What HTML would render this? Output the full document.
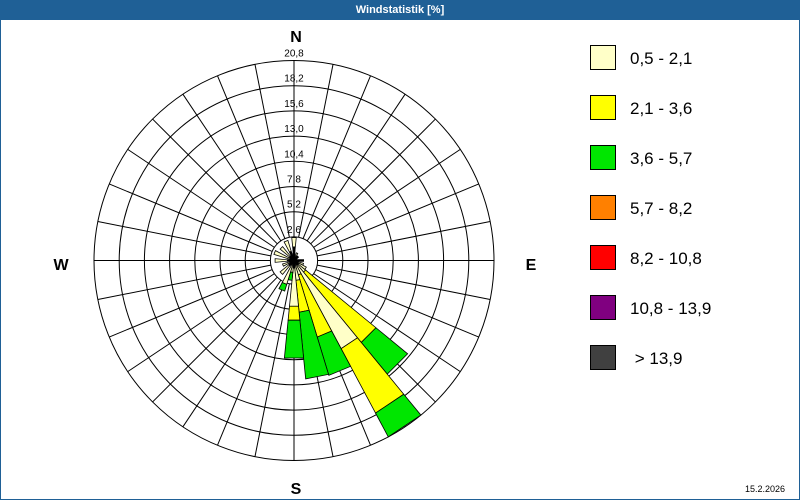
<!DOCTYPE html>
<html><head><meta charset="utf-8">
<style>
html,body{margin:0;padding:0;background:#fff;}
#wrap{position:relative;width:800px;height:500px;overflow:hidden;background:#fff;font-family:"Liberation Sans",sans-serif;}
#hdr{position:absolute;left:0;top:0;width:800px;height:20px;background:#1f6096;color:#fff;font-size:11px;font-weight:bold;text-align:center;line-height:20px;}
#frame{position:absolute;left:0;top:20px;width:798px;height:479px;border:1px solid #1f6096;border-top:none;}
svg{position:absolute;left:0;top:0;}
.lg{position:absolute;left:590px;width:24px;height:23px;border:1px solid #000;}
.lt{position:absolute;left:630px;font-size:17px;color:#000;line-height:20px;}
</style></head><body>
<div id="wrap">
<div id="hdr">Windstatistik [%]</div>
<div id="frame"></div>
<svg id="s" width="800" height="500" xmlns="http://www.w3.org/2000/svg"></svg>
<div class="lg" style="top:45px;background:#ffffc8"></div><div class="lt" style="top:49px">0,5 - 2,1</div>
<div class="lg" style="top:95px;background:#ffff00"></div><div class="lt" style="top:99px">2,1 - 3,6</div>
<div class="lg" style="top:145px;background:#00e600"></div><div class="lt" style="top:149px">3,6 - 5,7</div>
<div class="lg" style="top:195px;background:#ff8000"></div><div class="lt" style="top:199px">5,7 - 8,2</div>
<div class="lg" style="top:245px;background:#ff0000"></div><div class="lt" style="top:249px">8,2 - 10,8</div>
<div class="lg" style="top:295px;background:#800080"></div><div class="lt" style="top:299px">10,8 - 13,9</div>
<div class="lg" style="top:345px;background:#404040"></div><div class="lt" style="top:349px">&nbsp;&gt; 13,9</div>
<div style="position:absolute;left:745px;top:484px;font-size:9px;color:#000">15.2.2026</div>
</div>
<script>
var s=document.getElementById('s'),cx=294,cy=260.5,h='';
function P(r,b){var a=(b-90)*Math.PI/180;return [(cx+r*Math.cos(a)).toFixed(2),(cy+r*Math.sin(a)).toFixed(2)];}
// rings
for(var k=1;k<=8;k++){var r=200-25.2*(8-k);h+='<circle cx="'+cx+'" cy="'+cy+'" r="'+r+'" fill="none" stroke="#000" stroke-width="1"/>';}
for(var i=0;i<32;i++){var b=i*11.25,p1=P(23.6,b),p2=P(200,b);h+='<line x1="'+p1[0]+'" y1="'+p1[1]+'" x2="'+p2[0]+'" y2="'+p2[1]+'" stroke="#000" stroke-width="1"/>';}
// labels
var labs=['2,6','5,2','7,8','10,4','13,0','15,6','18,2','20,8'];
for(var k=1;k<=8;k++){var r=200-25.2*(8-k);h+='<text x="'+cx+'" y="'+(cy-r-4)+'" font-size="10" text-anchor="middle" font-family="Liberation Sans,sans-serif">'+labs[k-1]+'</text>';}
var C={L:'#ffffc8',Y:'#ffff00',G:'#00e600',K:'#000'};
var bars=[
[135,[['L',0,15],['Y',15,106],['G',106,147]]],
[146.25,[['L',0,100],['Y',100,173],['G',173,200]]],
[157.5,[['L',0,15],['Y',15,80],['G',80,120]]],
[168.75,[['L',0,20],['Y',20,52],['G',52,119]]],
[180,[['L',0,46],['Y',46,60],['G',60,98]]],
[191.25,[['L',0,12],['G',12,20]]],
[202.5,[['L',0,25],['G',25,32]]],
[270,[['L',0,19]]],[292.5,[['L',0,21]]],[315,[['L',0,18]]],[337.5,[['L',0,21]]],
[0,[['L',0,23]]],[247.5,[['L',0,12]]],[225,[['L',0,18]]],[22.5,[['L',0,8]]],[112.5,[['L',0,10]]],[123.75,[['L',0,14]]]
];
bars.forEach(function(br){var b=br[0];br[1].forEach(function(sg){
 var a=P(sg[1],b-5.625),c=P(sg[1],b+5.625),d=P(sg[2],b+5.625),e=P(sg[2],b-5.625);
 h+='<polygon points="'+a+' '+c+' '+d+' '+e+'" fill="'+C[sg[0]]+'" stroke="#000" stroke-width="0.8"/>';});});
// black center ticks
[[0,14],[90,10],[180,8],[270,7],[45,6],[135,6],[225,7],[315,6],[337.5,10]].forEach(function(t){var p=P(t[1],t[0]);h+='<line x1="'+cx+'" y1="'+cy+'" x2="'+p[0]+'" y2="'+p[1]+'" stroke="#000" stroke-width="2.5"/>';});
h+='<text x="296" y="42" font-size="16" font-weight="bold" text-anchor="middle" font-family="Liberation Sans,sans-serif">N</text>';
h+='<text x="296" y="494" font-size="16" font-weight="bold" text-anchor="middle" font-family="Liberation Sans,sans-serif">S</text>';
h+='<text x="61" y="270" font-size="16" font-weight="bold" text-anchor="middle" font-family="Liberation Sans,sans-serif">W</text>';
h+='<text x="531" y="270" font-size="16" font-weight="bold" text-anchor="middle" font-family="Liberation Sans,sans-serif">E</text>';
s.innerHTML=h;
</script>
</body></html>
